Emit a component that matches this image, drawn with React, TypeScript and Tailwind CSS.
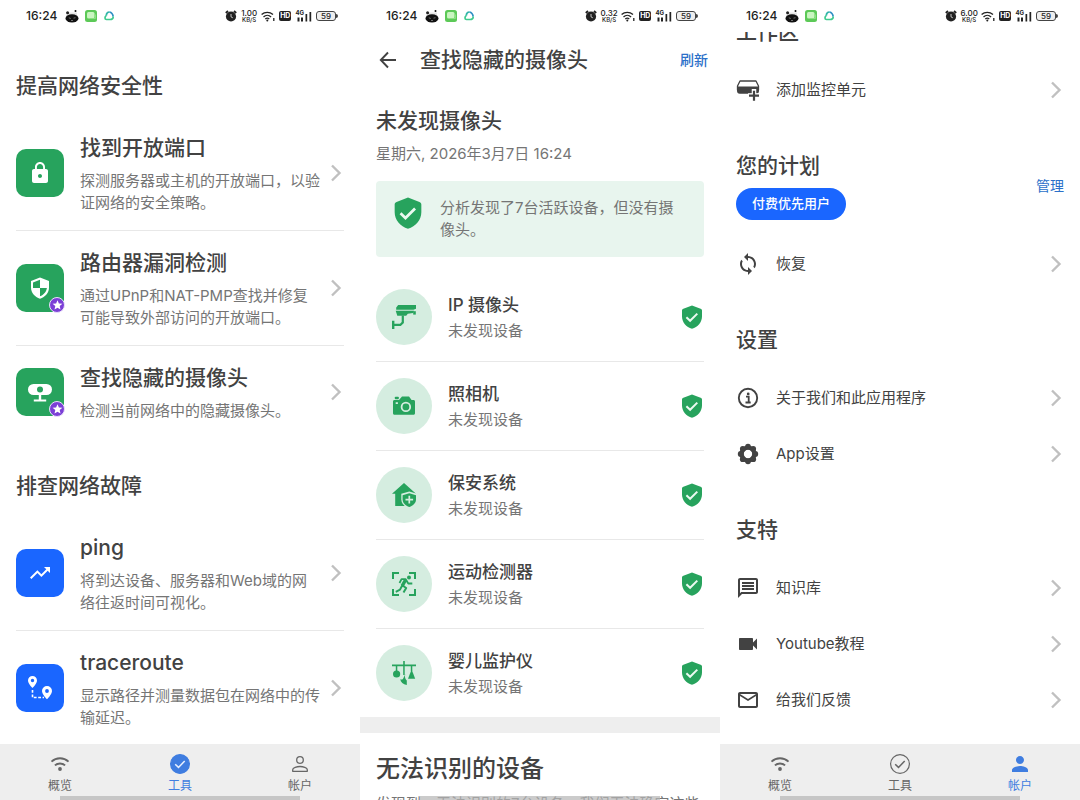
import React from "react";
import clsx from "clsx";
import {
  MdLock,
  MdLoop,
  MdMailOutline,
  MdOutlineMessage,
  MdPerson,
  MdTrendingUp,
  MdVideocam,
} from "react-icons/md";

type IconProps = { className?: string };

/* ---------- icons ---------- */

const ChevronIcon = () => (
  <svg viewBox="0 0 16 24" className="h-6 w-4 shrink-0" fill="none" aria-hidden="true">
    <path d="M4 4.500l7.500 7.500L4 19.500" stroke="#c0c0c0" strokeWidth="2.400" />
  </svg>
);

const ShieldCheckIcon = ({ className }: IconProps) => (
  <svg viewBox="0 0 24 24" className={className} fill="none" aria-hidden="true">
    <path
      d="M12 .4l8.600 3.300c.9.3 1.400 1 1.400 1.900v5.800c0 5.600-4.200 10.600-10 12.400C6.200 22 2 17 2 11.400V5.600c0-.9.5-1.600 1.400-1.900z"
      fill="#27a35d"
    />
    <path d="M6.400 12.200l3.700 3.600 7.200-7.200" stroke="#ebfaf1" strokeWidth="2" />
  </svg>
);

const RouterShieldIcon = () => (
  <svg viewBox="0 0 24 24" className="size-6" aria-hidden="true">
    <path d="M12 1.500l9 3.400v6.600c0 5.200-3.800 9.700-9 11.200-5.200-1.500-9-6-9-11.200V4.900z" fill="#fff" />
    <path d="M12 3.800v8.200H5V6.400zM12 12h6.900c-.5 3.700-3.200 6.900-6.900 8.300z" fill="#27a35d" />
  </svg>
);

const WebcamIcon = () => (
  <svg viewBox="0 0 24 24" className="size-6" aria-hidden="true">
    <rect x="0" y="4" width="24" height="11" rx="5.500" fill="#fff" />
    <circle cx="12" cy="9.500" r="3" fill="#27a35d" />
    <path d="M10.800 14h2.400v5.500h5v2H5.800v-2h5z" fill="#fff" />
  </svg>
);

const RouteIcon = () => (
  <svg viewBox="0 0 24 24" className="size-6" aria-hidden="true">
    <path
      fillRule="evenodd"
      d="M4.500 0a4.500 4.500 0 0 1 4.500 4.500C9 7.600 4.500 12 4.500 12S0 7.600 0 4.500A4.500 4.500 0 0 1 4.500 0zm0 2.800a1.700 1.700 0 1 0 0 3.400 1.700 1.700 0 0 0 0-3.400zM19 10a5 5 0 0 1 5 5c0 3.400-5 8.300-5 8.300S14 18.400 14 15a5 5 0 0 1 5-5zm0 3.100a1.900 1.900 0 1 0 0 3.800 1.900 1.900 0 0 0 0-3.800z"
      fill="#fff"
    />
    <path d="M4.500 14v7.500H16" stroke="#fff" strokeWidth="1.600" strokeDasharray="2.800 1.600" fill="none" />
  </svg>
);

const CctvIcon = () => (
  <svg viewBox="0 0 24 24" className="size-6" fill="#27a35d" aria-hidden="true">
    <path d="M6.200 0H24v3.800l-2.500 1H4.200V2.500z" />
    <path d="M3.700 5.800H22l-.8 2.300-5.400.6-1.600 2.100H5.300z" />
    <path d="M21.200 6.200h2.600v3.400h-2.600z" />
    <path d="M9.700 10.500h2.200v7.400L8.800 21H2.400v3H0v-8.200h2.400v3H8l1.700-1.700z" />
  </svg>
);

const CameraIcon = () => (
  <svg viewBox="0 0 24 24" className="size-6" fill="#27a35d" aria-hidden="true">
    <rect x="2.800" y="2.800" width="4" height="2.400" rx=".8" />
    <path
      fillRule="evenodd"
      d="M2.500 6H7l3-3.400h7L19.600 6h1.900c.9 0 1.500.6 1.500 1.500v11.800c0 .9-.6 1.500-1.500 1.500h-19C1.600 20.800 1 20.200 1 19.300V7.500C1 6.600 1.600 6 2.500 6zm11.400 1.700a5.200 5.200 0 1 0 0 10.400 5.200 5.200 0 0 0 0-10.400zm0 1.800a3.400 3.400 0 1 1 0 6.800 3.400 3.400 0 0 1 0-6.800zM3.700 8.300V10h2.200V8.300z"
    />
  </svg>
);

const HomeShieldIcon = () => (
  <svg viewBox="0 0 24 24" className="size-6" aria-hidden="true">
    <path d="M12 0l12 10.800h-3.200V23H3.200V10.800H0z" fill="#27a35d" />
    <path
      d="M17.300 8.600l8 2.200v5.400c0 4.600-3.600 7.800-8 9.300-4.400-1.500-8-4.700-8-9.300v-5.400z"
      fill="#d5ede0"
    />
    <path d="M17.300 10.200l6.700 2v4.100c0 3.900-2.900 6.400-6.700 7.700-3.800-1.300-6.700-3.800-6.700-7.700v-4.100z" fill="#27a35d" />
    <path d="M17.300 12.800v7.600M13.500 16.600h7.600" stroke="#d5ede0" strokeWidth="1.700" />
  </svg>
);

const MotionIcon = () => (
  <svg viewBox="0 0 24 24" className="size-6" fill="none" stroke="#27a35d" aria-hidden="true">
    <path d="M7 1H1v6M17 1h6v6M7 23H1v-6M17 23h6v-6" strokeWidth="2" />
    <circle cx="17" cy="5.500" r="2" fill="#27a35d" stroke="none" />
    <path d="M7.500 11l2-3.800h4.200l2.600 4.300h4" strokeWidth="1.800" strokeLinejoin="round" />
    <path d="M13.500 8l-3.300 5.800" strokeWidth="3.400" />
    <path d="M9.800 13l4.400 3-2.700 4.500M10.200 13.500L8 17.600l-4.200 2.200" strokeWidth="2" strokeLinejoin="round" />
  </svg>
);

const BabyMobileIcon = () => (
  <svg viewBox="0 0 24 24" className="size-6" fill="#27a35d" aria-hidden="true">
    <path d="M11.200 0h1.600v3.600H24v1.700H0V3.600h11.200z" />
    <path d="M3.800 5h1.500v5H3.800zM11.200 5h1.500v9h-1.500zM18.800 5h1.500v5h-1.500z" />
    <circle cx="4.600" cy="13" r="3.600" />
    <path d="M19.600 8.500l3.600 9.300h-7.200z" />
    <path d="M13.300 13.200c-1 3 .2 5.200 1.500 6.300V24c-3.700-.5-6.200-2.600-6.600-6 1.300 1 2.600.5 3-.6z" />
  </svg>
);

const StarBadge = () => (
  <svg viewBox="0 0 16 16" className="absolute -right-px -bottom-px size-4" aria-hidden="true">
    <circle cx="8" cy="8" r="7.500" fill="#7b3fd6" stroke="#eadffb" />
    <path
      d="M8.500 3.200l1.400 3.300 3.500.3-2.700 2.300.8 3.400-3-1.800-3 1.800.8-3.400-2.700-2.300 3.500-.3z"
      fill="#fff"
    />
  </svg>
);

const UnitAddIcon = () => (
  <svg viewBox="0 0 24 24" className="size-6" fill="none" aria-hidden="true">
    <path d="M4 3h16l2.500 5v4H1.500V8z" stroke="#424242" strokeWidth="1.300" strokeLinejoin="round" />
    <path d="M1 8.500h22V13c0 1.500-1 2.700-2.700 2.700H3.700C2 15.700 1 14.500 1 13z" fill="#424242" />
    <path d="M18 11v12M12 17.500h12" stroke="#fff" strokeWidth="4.500" />
    <path d="M18 12.700v10M13 17.700h10" stroke="#424242" strokeWidth="2.200" />
  </svg>
);

const InfoIcon = () => (
  <svg viewBox="0 0 24 24" className="size-6" fill="none" stroke="#424242" aria-hidden="true">
    <circle cx="12" cy="12" r="9.200" strokeWidth="1.900" />
    <path d="M10 10.700h2.700v5.400M9.500 16.500h5.200" strokeWidth="1.800" />
    <circle cx="12.200" cy="7.900" r="1.400" fill="#424242" stroke="none" />
  </svg>
);

const GearIcon = () => (
  <svg viewBox="0 0 24 24" className="size-6" fill="none" stroke="#424242" aria-hidden="true">
    <circle cx="12" cy="12" r="6.400" strokeWidth="4.400" />
    <g fill="#424242" stroke="none">
      <circle cx="12" cy="4.700" r="2.900" />
      <circle cx="17.200" cy="6.800" r="2.900" />
      <circle cx="19.300" cy="12" r="2.900" />
      <circle cx="17.200" cy="17.200" r="2.900" />
      <circle cx="12" cy="19.300" r="2.900" />
      <circle cx="6.800" cy="17.200" r="2.900" />
      <circle cx="4.700" cy="12" r="2.900" />
      <circle cx="6.800" cy="6.800" r="2.900" />
    </g>
  </svg>
);

const WifiIcon = ({ className }: IconProps) => (
  <svg viewBox="0 0 20 16" className={className} fill="none" stroke="currentColor" aria-hidden="true">
    <path d="M1.500 5.600a12.500 12.500 0 0 1 17 0" strokeWidth="1.900" />
    <path d="M4.900 9.400a7.600 7.600 0 0 1 10.200 0" strokeWidth="1.900" />
    <circle cx="10" cy="13" r="1.900" fill="currentColor" stroke="none" />
  </svg>
);

const PersonIcon = () => (
  <svg viewBox="0 0 24 24" className="size-6" fill="none" stroke="currentColor" strokeWidth="1.300" aria-hidden="true">
    <circle cx="12" cy="8" r="3.300" />
    <path d="M4.700 19.300v-1.500c0-2.300 4.300-3.300 7.300-3.300s7.300 1 7.300 3.300v1.500z" strokeLinejoin="round" />
  </svg>
);

const CheckCircleIcon = ({ filled }: { filled?: boolean }) => (
  <svg viewBox="0 0 24 24" className="size-6" fill="none" aria-hidden="true">
    <circle
      cx="12"
      cy="12"
      r="9.400"
      strokeWidth="1.200"
      stroke="currentColor"
      fill={filled ? "currentColor" : "none"}
    />
    <path d="M7.200 12.200l3.300 3.200 6.200-6.400" stroke={filled ? "#e8f0ff" : "currentColor"} strokeWidth="1.500" />
  </svg>
);

const BackIcon = () => (
  <svg viewBox="0 0 24 24" className="size-6" fill="none" stroke="#424242" strokeWidth="1.900" aria-hidden="true">
    <path d="M20 12H5.500M12 4.500L4.800 12l7.200 7.500" />
  </svg>
);

/* ---------- shared pieces ---------- */

const StatusBar = ({ speed }: { speed: string }) => (
  <div className="flex h-8 shrink-0 items-center pr-5.5 pl-6.5 text-[#222]">
    <span className="text-xs font-medium">16:24</span>
    <div className="ml-2 flex items-center gap-1.5">
      <svg viewBox="0 0 14 14" className="size-3.5" aria-hidden="true">
        <path d="M1.500 3.500h10.500v5H1.500z" fill="#e4e4e4" />
        <ellipse cx="7" cy="9.400" rx="6.500" ry="4.200" fill="#111" />
        <circle cx="2.600" cy="3.800" r="1.500" fill="#222" />
        <circle cx="10.500" cy="2" r="1" fill="#111" />
        <path d="M3.800 8.800l2 .7M8.500 9.200l2-.5M6 11.500h2" stroke="#888" strokeWidth=".8" />
      </svg>
      <svg viewBox="0 0 12 12" className="size-3" aria-hidden="true">
        <rect width="12" height="12" rx="2.500" fill="#5cc957" />
        <rect x="2" y="2" width="7.500" height="6.500" rx="1.500" fill="#c9f5c0" />
        <path d="M5 8.500h5.500v-4" stroke="#8be080" fill="none" />
      </svg>
      <svg viewBox="0 0 12 12" className="size-3" fill="none" strokeWidth="1.700" aria-hidden="true">
        <path d="M3.300 5.800C3.300 3.500 4.800 2 6.500 2" stroke="#31b5a8" />
        <path d="M6.500 2c2 .4 3.300 2.200 3.700 4.500" stroke="#2d8fc4" />
        <path d="M10.200 6.500c.2 2-1.200 3-3.200 3H3.500C1.500 9.500 1.500 6.700 3.300 5.800" stroke="#3ecb8e" />
      </svg>
    </div>
    <div className="ml-auto flex items-center gap-1">
      <svg viewBox="0 0 12 12" className="size-3" aria-hidden="true">
        <path d="M.8 3L3 1M11.200 3L9 1" stroke="#222" strokeWidth="1.800" />
        <circle cx="6" cy="6.500" r="5.100" fill="#222" />
        <path d="M6 4v2.800l1.800 1" stroke="#ddd" strokeWidth=".9" fill="none" />
      </svg>
      <div className="flex w-4 flex-col items-center font-medium">
        <span className="text-[8px] leading-2">{speed}</span>
        <span className="text-[6px] leading-1.5">KB/S</span>
      </div>
      <svg viewBox="0 0 14 12" className="h-3 w-3.5" fill="none" stroke="#222" strokeWidth="1.300" aria-hidden="true">
        <path d="M.6 4.600a8.500 8.500 0 0 1 11.400 0M2.500 6.900a5.600 5.600 0 0 1 7.600 0M4.300 9a3 3 0 0 1 4 0" />
        <circle cx="6.300" cy="10.400" r="1" fill="#222" stroke="none" />
        <path d="M12.800 8v3" />
      </svg>
      <span className="rounded-xs bg-[#222] px-px text-[7px] leading-2.5 font-bold text-white">HD</span>
      <div className="flex items-start">
        <span className="-mr-2 text-[6px] leading-1.5 font-bold">4G</span>
        <svg viewBox="0 0 16 11" className="h-3 w-4" fill="#222" aria-hidden="true">
          <path d="M1.500 7h2v4h-2zM5 7h2v4H5zM9.500 3.500h1.700V11H9.500zM13.500 1.500h1.700V11h-1.700z" />
        </svg>
      </div>
      <div className="flex items-center">
        <span className="flex h-2.5 w-5 items-center justify-center rounded-[3px] border border-[#444] bg-[#eee] text-[8px] font-medium">
          59
        </span>
        <span className="h-1 w-0.5 rounded-r-xs bg-[#444]" />
      </div>
    </div>
  </div>
);

const HomeIndicator = () => (
  <div className="absolute bottom-0 left-1/2 h-1 w-2/3 -translate-x-1/2 bg-[#b5b5b5]/70" />
);

const Screen = ({ children }: { children: React.ReactNode }) => (
  <section className="relative flex h-full min-w-0 flex-col overflow-hidden bg-white">
    {children}
    <HomeIndicator />
  </section>
);

const SectionTitle = ({ children }: { children: React.ReactNode }) => (
  <h2 className="text-[21px] leading-7 font-medium">{children}</h2>
);

const BottomNav = ({ active }: { active: "tools" | "account" }) => {
  const tabs = [
    { id: "overview", label: "概览", icon: <WifiIcon className="h-4 w-5" /> },
    { id: "tools", label: "工具", icon: <CheckCircleIcon filled={active === "tools"} /> },
    {
      id: "account",
      label: "帐户",
      icon: active === "account" ? <MdPerson className="size-6" /> : <PersonIcon />,
    },
  ];

  return (
    <nav className="grid h-14 shrink-0 grid-cols-3 bg-[#eee]">
      {tabs.map((tab) => (
        <button
          key={tab.id}
          className={clsx(
            "flex flex-col items-center pt-2",
            tab.id === active ? "text-[#3f7de0]" : "text-[#666]"
          )}
        >
          <span className="flex size-6 items-center justify-center">{tab.icon}</span>
          <span className="text-xs leading-5">{tab.label}</span>
        </button>
      ))}
    </nav>
  );
};

/* ---------- tools ---------- */

interface ITool {
  title: string;
  text: string;
  icon: React.ReactNode;
  blue?: boolean;
  premium?: boolean;
}

const SECURITY_TOOLS: ITool[] = [
  {
    title: "找到开放端口",
    text: "探测服务器或主机的开放端口，以验证网络的安全策略。",
    icon: <MdLock className="size-6" />,
  },
  {
    title: "路由器漏洞检测",
    text: "通过UPnP和NAT-PMP查找并修复可能导致外部访问的开放端口。",
    icon: <RouterShieldIcon />,
    premium: true,
  },
  {
    title: "查找隐藏的摄像头",
    text: "检测当前网络中的隐藏摄像头。",
    icon: <WebcamIcon />,
    premium: true,
  },
];

const NETWORK_TOOLS: ITool[] = [
  {
    title: "ping",
    text: "将到达设备、服务器和Web域的网络往返时间可视化。",
    icon: <MdTrendingUp className="size-6" />,
    blue: true,
  },
  {
    title: "traceroute",
    text: "显示路径并测量数据包在网络中的传输延迟。",
    icon: <RouteIcon />,
    blue: true,
  },
];

const ToolRow = ({ tool, divider }: { tool: ITool; divider: boolean }) => (
  <button
    className={clsx(
      "flex w-full items-center gap-4 py-3.5 text-left",
      divider && "border-b border-[#e8e8e8]"
    )}
  >
    <span
      className={clsx(
        "relative flex size-12 shrink-0 items-center justify-center rounded-[10px] text-white",
        tool.blue ? "bg-[#1a66ff]" : "bg-[#27a35d]"
      )}
    >
      {tool.icon}
      {tool.premium && <StarBadge />}
    </span>
    <span className="flex min-w-0 flex-1 flex-col gap-2 pt-1 pb-0.5">
      <span className="text-[21px] leading-7 font-medium">{tool.title}</span>
      <span className="text-[15px] leading-[22px] text-[#757575]">{tool.text}</span>
    </span>
    <span className="-ml-2">
      <ChevronIcon />
    </span>
  </button>
);

const ToolsScreen = () => (
  <Screen>
    <StatusBar speed="1.00" />
    <main className="flex min-h-0 flex-1 flex-col gap-[34px] overflow-hidden px-4 pt-10">
      <div>
        <SectionTitle>提高网络安全性</SectionTitle>
        <div className="mt-4">
          {SECURITY_TOOLS.map((tool, idx) => (
            <ToolRow key={tool.title} tool={tool} divider={idx < SECURITY_TOOLS.length - 1} />
          ))}
        </div>
      </div>
      <div>
        <SectionTitle>排查网络故障</SectionTitle>
        <div className="mt-4">
          {NETWORK_TOOLS.map((tool) => (
            <ToolRow key={tool.title} tool={tool} divider />
          ))}
        </div>
      </div>
    </main>
    <BottomNav active="tools" />
  </Screen>
);

/* ---------- hidden cameras ---------- */

const DEVICE_TYPES = [
  { name: "IP 摄像头", icon: <CctvIcon /> },
  { name: "照相机", icon: <CameraIcon /> },
  { name: "保安系统", icon: <HomeShieldIcon /> },
  { name: "运动检测器", icon: <MotionIcon /> },
  { name: "婴儿监护仪", icon: <BabyMobileIcon /> },
];

const CameraScreen = () => (
  <Screen>
    <StatusBar speed="0.32" />
    <header className="flex h-14 shrink-0 items-center px-4">
      <button aria-label="返回">
        <BackIcon />
      </button>
      <h1 className="ml-5 text-[21px] leading-7 font-medium">查找隐藏的摄像头</h1>
      <button className="-mr-1 ml-auto text-sm font-medium text-[#2b70c9]">刷新</button>
    </header>
    <main className="flex min-h-0 flex-1 flex-col overflow-hidden">
      <div className="px-4 pt-[19px]">
        <SectionTitle>未发现摄像头</SectionTitle>
        <p className="mt-2 text-[15px] leading-[22px] text-[#757575]">星期六, 2026年3月7日 16:24</p>
        <div className="mt-4 flex items-start gap-4 rounded bg-[#e8f5ee] p-4">
          <ShieldCheckIcon className="size-8 shrink-0" />
          <p className="text-[15px] leading-[22px] text-[#757575]">分析发现了7台活跃设备，但没有摄像头。</p>
        </div>
        <ul className="mt-4">
          {DEVICE_TYPES.map((device) => (
            <li
              key={device.name}
              className="flex items-center gap-4 border-b border-[#e8e8e8] py-4 last:border-b-0"
            >
              <span className="flex size-14 shrink-0 items-center justify-center rounded-full bg-[#d5ede0]">
                {device.icon}
              </span>
              <div className="min-w-0 flex-1">
                <h3 className="text-[17px] leading-7 font-medium">{device.name}</h3>
                <p className="text-[15px] leading-6 text-[#757575]">未发现设备</p>
              </div>
              <ShieldCheckIcon className="size-6 shrink-0" />
            </li>
          ))}
        </ul>
      </div>
      <div className="h-4 shrink-0 bg-[#eee]" />
      <div className="px-4 pt-5">
        <h2 className="text-2xl font-medium">无法识别的设备</h2>
        <p className="mt-2 text-[15px] leading-[22px] text-[#757575]">
          发现到一无法识别的7台设备，我们无法确定这些
        </p>
      </div>
    </main>
  </Screen>
);

/* ---------- account ---------- */

const MenuRow = ({ icon, label }: { icon: React.ReactNode; label: string }) => (
  <button className="flex h-14 w-full items-center gap-4 text-left text-[#424242]">
    {icon}
    <span className="min-w-0 flex-1 text-[15px]">{label}</span>
    <ChevronIcon />
  </button>
);

const AccountScreen = () => (
  <Screen>
    <StatusBar speed="6.00" />
    <main className="min-h-0 flex-1 overflow-hidden px-4">
      {/* scrolled, so the first title sits partly under the status bar */}
      <div className="-mt-3.5 flex flex-col gap-[34px]">
        <div>
          <SectionTitle>工作区</SectionTitle>
          <div className="mt-4">
            <MenuRow icon={<UnitAddIcon />} label="添加监控单元" />
          </div>
        </div>
        <div>
          <div className="flex items-center justify-between">
            <div>
              <SectionTitle>您的计划</SectionTitle>
              <span className="mt-2 flex h-8 items-center rounded-full bg-[#1a66ff] px-4 text-[13px] font-medium text-white">
                付费优先用户
              </span>
            </div>
            <button className="text-sm text-[#2b70c9]">管理</button>
          </div>
          <div className="mt-4">
            <MenuRow icon={<MdLoop className="size-6" />} label="恢复" />
          </div>
        </div>
        <div>
          <SectionTitle>设置</SectionTitle>
          <div className="mt-4">
            <MenuRow icon={<InfoIcon />} label="关于我们和此应用程序" />
            <MenuRow icon={<GearIcon />} label="App设置" />
          </div>
        </div>
        <div>
          <SectionTitle>支特</SectionTitle>
          <div className="mt-4">
            <MenuRow icon={<MdOutlineMessage className="size-6" />} label="知识库" />
            <MenuRow icon={<MdVideocam className="size-6" />} label="Youtube教程" />
            <MenuRow icon={<MdMailOutline className="size-6" />} label="给我们反馈" />
          </div>
        </div>
      </div>
    </main>
    <BottomNav active="account" />
  </Screen>
);

const App = () => {
  return (
    <div className="grid h-screen grid-cols-3 bg-white font-['Inter','Noto_Sans_CJK_SC',sans-serif] text-[#424242]">
      <ToolsScreen />
      <CameraScreen />
      <AccountScreen />
    </div>
  );
};

export default App;
